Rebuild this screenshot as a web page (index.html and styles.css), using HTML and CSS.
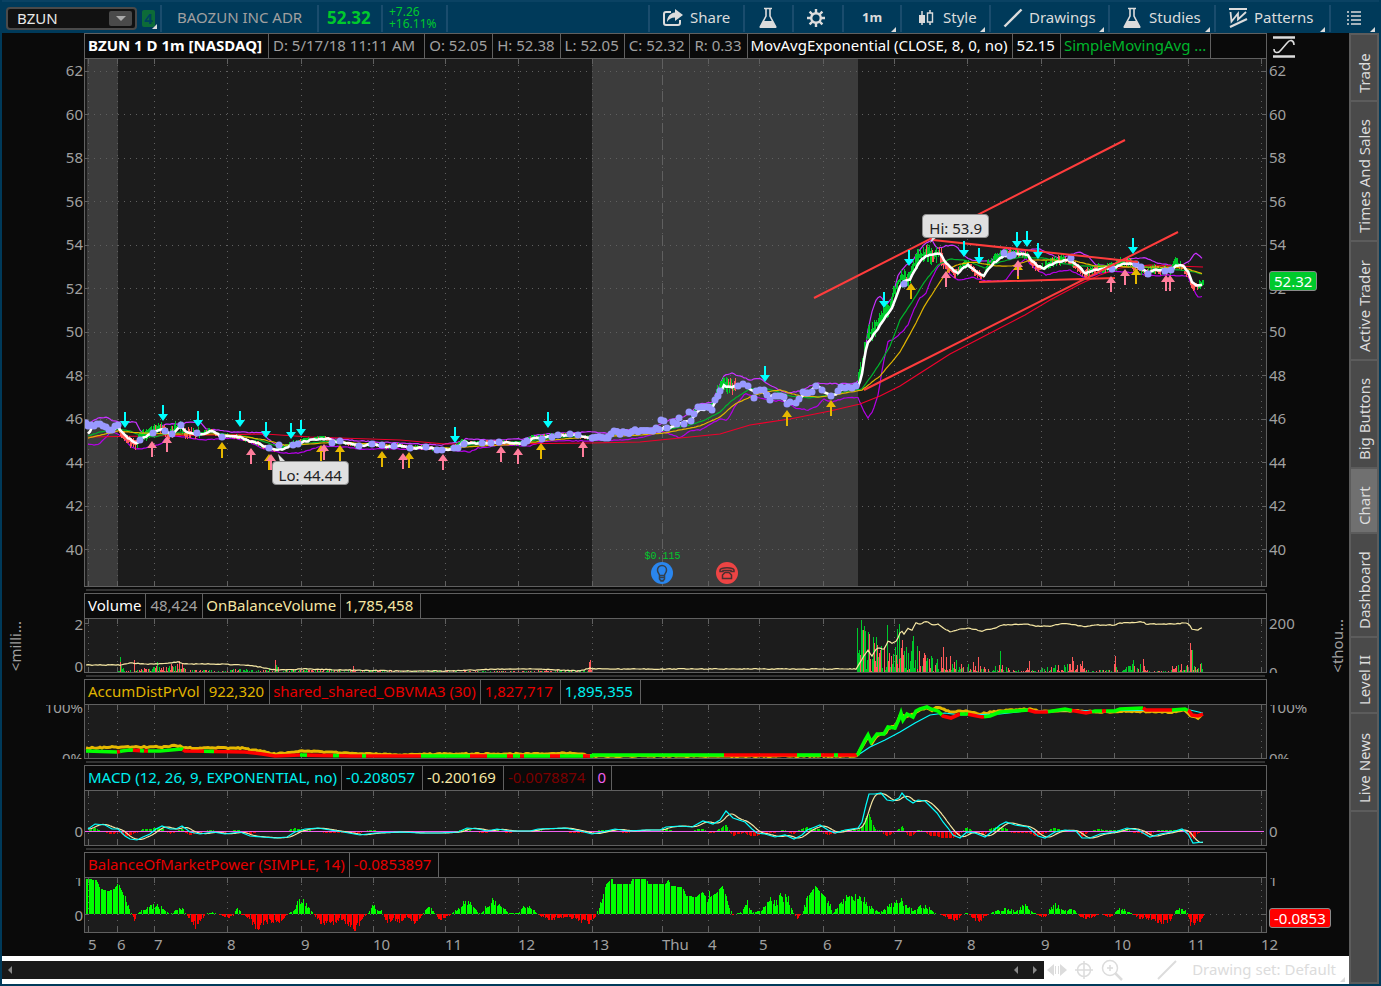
FILE: index.html
```html
<!DOCTYPE html>
<html lang="en">
<head>
    <meta charset="UTF-8">
    <meta name="viewport" content="width=device-width, initial-scale=1.0">
    <title>BZUN - Chart</title>
    <link rel="stylesheet" href="styles.css">
</head>
<body>
    <header class="toolbar">
        <div class="symbol">
            <input type="text" value="BZUN" aria-label="Symbol">
            <button type="button" aria-label="Symbol list"><svg width="10" height="5" viewBox="0 0 10 5"><path d="M0 0h10L5 5z" fill="#aaa"/></svg></button>
        </div>
        <button type="button" class="link-color">4</button>
        <div class="cell company">BAOZUN INC ADR</div>
        <div class="cell last">52.32</div>
        <div class="cell change"><span>+7.26</span><span>+16.11%</span></div>
        <div class="cell spacer"></div>

        <button type="button" class="cell tool share">
            <svg width="22" height="20" viewBox="0 0 22 20"><path d="M9 4H4a2 2 0 0 0-2 2v9a2 2 0 0 0 2 2h12a2 2 0 0 0 2-2v-3" fill="none" stroke="#dcdcdc" stroke-width="2"/><path d="M13 1l8 6-8 6V9.500c-4 0-6 1.500-8 4.500 0-5 3-9 8-9.500z" fill="#dcdcdc"/></svg>
            Share
        </button>
        <button type="button" class="cell tool flask" aria-label="Edit studies">
            <svg width="20" height="22" viewBox="0 0 20 22"><path d="M6 1.500h8M8 2v7L2.500 19.500h15L12 9V2" fill="none" stroke="#dcdcdc" stroke-width="1.600"/><path d="M5.500 14h9l4 7h-17z" fill="#dcdcdc"/></svg>
        </button>
        <button type="button" class="cell tool gear" aria-label="Settings">
            <svg width="20" height="20" viewBox="0 0 20 20"><circle cx="10" cy="10" r="4.800" fill="none" stroke="#dcdcdc" stroke-width="2.400"/><path d="M10 1v4M10 15v4M1 10h4M15 10h4M3.600 3.600l2.800 2.800M13.600 13.600l2.800 2.800M3.600 16.400l2.800-2.800M13.600 6.400l2.800-2.800" stroke="#dcdcdc" stroke-width="2.400"/></svg>
        </button>
        <button type="button" class="cell tool period more">1m</button>
        <button type="button" class="cell tool style more">
            <svg width="18" height="18" viewBox="0 0 18 18"><path d="M5 2v14M13 1v3M13 13v3" stroke="#dcdcdc" stroke-width="1.500"/><path d="M2 6h6v8H2z" fill="#dcdcdc"/><path d="M10.500 4h5v9h-5z" fill="none" stroke="#dcdcdc" stroke-width="1.400"/></svg>
            Style
        </button>
        <button type="button" class="cell tool drawings more">
            <svg width="20" height="20" viewBox="0 0 20 20"><path d="M1.500 18.500L18.500 1.500" stroke="#dcdcdc" stroke-width="2.400"/></svg>
            Drawings
        </button>
        <button type="button" class="cell tool studies more">
            <svg width="20" height="22" viewBox="0 0 20 22"><path d="M6 1.500h8M8 2v7L2.500 19.500h15L12 9V2" fill="none" stroke="#dcdcdc" stroke-width="1.600"/><path d="M5.500 14h9l4 7h-17z" fill="#dcdcdc"/></svg>
            Studies
        </button>
        <button type="button" class="cell tool patterns more">
            <svg width="20" height="22" viewBox="0 0 20 22"><path d="M1 2h18M2 20L19 12" stroke="#dcdcdc" stroke-width="2.200"/><path d="M2.500 5l1 9.500L10 6.500v6L18 5" fill="none" stroke="#dcdcdc" stroke-width="1.800"/></svg>
            Patterns
        </button>
        <button type="button" class="cell tool menu more" aria-label="Menu">
            <svg width="16" height="14" viewBox="0 0 16 14"><path d="M1 1h2M1 5h2M1 9h2M1 13h2M5 1h10M5 5h10M5 9h10M5 13h10" stroke="#dcdcdc" stroke-width="1.600"/></svg>
        </button>
    </header>

    <main class="workspace">
        <section class="charts">
            <div class="row price-row">
                <div class="axis left" id="priceLeft"></div>
                <div class="panel">
                    <div class="legend">
                        <span class="title">BZUN 1 D 1m [NASDAQ]</span>
                        <span class="date">D: 5/17/18 11:11 AM</span>
                        <span class="num">O: 52.05</span>
                        <span class="num">H: 52.38</span>
                        <span class="num">L: 52.05</span>
                        <span class="num">C: 52.32</span>
                        <span class="num">R: 0.33</span>
                        <span class="white">MovAvgExponential (CLOSE, 8, 0, no)</span>
                        <span class="white num">52.15</span>
                        <span class="green">SimpleMovingAvg ...</span>
                    </div>
                    <div class="plot">
                        <svg id="price" viewBox="85 59 1181 527" preserveAspectRatio="none"></svg>
                        <span class="bubble hi">Hi: 53.9</span>
                        <span class="bubble lo">Lo: 44.44</span>
                        <div class="event dividend">
                            <span>$0.115</span>
                            <svg width="22" height="22" viewBox="0 0 22 22"><circle cx="11" cy="11" r="11" fill="#2a86ee"/><path d="M8.500 13.500c0-2-2-2.500-2-5.500a4.500 4.500 0 0 1 9 0c0 3-2 3.500-2 5.500zM8.500 15.500h5M9 18.500h4M8.500 13v4l1.500 2h2l1.500-2v-4" fill="none" stroke="#33414f" stroke-width="1.500"/></svg>
                        </div>
                        <div class="event earnings">
                            <svg width="22" height="22" viewBox="0 0 22 22"><circle cx="11" cy="11" r="11" fill="#ee4444"/><path d="M4 9.500V8c1-3 13-3 14 0v1.500h-3V8.500H7v1zM6.500 16.500V13l2.500-2.500h4l2.500 2.500v3.500z" fill="none" stroke="#4a3030" stroke-width="1.500"/></svg>
                        </div>
                    </div>
                </div>
                <div class="axis right">
                    <svg class="fit" width="22" height="22" viewBox="0 0 22 22"><path d="M0 1.500h22M0 20.500h22" stroke="#dcdcdc" stroke-width="2.400"/><path d="M1 13c0 4 4 5 7 1L14 7c3-4 7-3 7 2" fill="none" stroke="#dcdcdc" stroke-width="1.600"/></svg>
                    <div class="ticks" id="priceRight"></div>
                    <span class="tag up">52.32</span>
                </div>
            </div>
            <div class="splitter"></div>

            <div class="row volume-row">
                <div class="axis left"><span class="unit">&lt;milli...</span><div class="ticks"><span>2</span><span>0</span></div></div>
                <div class="panel">
                    <div class="legend">
                        <span class="white">Volume</span>
                        <span class="num">48,424</span>
                        <span class="cream">OnBalanceVolume</span>
                        <span class="cream long">1,785,458</span>
                    </div>
                    <div class="plot"><svg id="volume" viewBox="85 619 1181 53" preserveAspectRatio="none"></svg></div>
                </div>
                <div class="axis right"><div class="ticks"><span>200</span><span>0</span></div><span class="unit">&lt;thou...</span></div>
            </div>
            <div class="splitter"></div>

            <div class="row accum-row">
                <div class="axis left"><div class="ticks"><span>100%</span><span>0%</span></div></div>
                <div class="panel">
                    <div class="legend">
                        <span class="gold">AccumDistPrVol</span>
                        <span class="gold num">922,320</span>
                        <span class="red">shared_shared_OBVMA3 (30)</span>
                        <span class="red long">1,827,717</span>
                        <span class="cyan long">1,895,355</span>
                    </div>
                    <div class="plot"><svg id="accum" viewBox="85 705 1181 53" preserveAspectRatio="none"></svg></div>
                </div>
                <div class="axis right"><div class="ticks"><span>100%</span><span>0%</span></div></div>
            </div>
            <div class="splitter"></div>

            <div class="row macd-row">
                <div class="axis left"><div class="ticks"><span>0</span></div></div>
                <div class="panel">
                    <div class="legend">
                        <span class="cyan">MACD (12, 26, 9, EXPONENTIAL, no)</span>
                        <span class="cyan long">-0.208057</span>
                        <span class="cream long">-0.200169</span>
                        <span class="maroon long">-0.0078874</span>
                        <span class="magenta num">0</span>
                    </div>
                    <div class="plot"><svg id="macd" viewBox="85 791 1181 54" preserveAspectRatio="none"></svg></div>
                </div>
                <div class="axis right"><div class="ticks"><span>0</span></div></div>
            </div>
            <div class="splitter"></div>

            <div class="row power-row">
                <div class="axis left"><div class="ticks"><span>1</span><span>0</span></div></div>
                <div class="panel">
                    <div class="legend">
                        <span class="red">BalanceOfMarketPower (SIMPLE, 14)</span>
                        <span class="red long">-0.0853897</span>
                    </div>
                    <div class="plot"><svg id="power" viewBox="85 878 1181 54" preserveAspectRatio="none"></svg></div>
                </div>
                <div class="axis right"><div class="ticks"><span>1</span></div><span class="tag down">-0.0853</span></div>
            </div>

            <div class="hours" id="hours"></div>

            <footer class="bottom-bar">
                <div class="scrollbar">
                    <button type="button" aria-label="Scroll left"><svg width="5" height="8" viewBox="0 0 5 8"><path d="M4 0v8L0 4z" fill="#888"/></svg></button>
                    <div class="track"></div>
                    <button type="button" aria-label="Step left"><svg width="5" height="8" viewBox="0 0 5 8"><path d="M4 0v8L0 4z" fill="#888"/></svg></button>
                    <button type="button" aria-label="Step right"><svg width="5" height="8" viewBox="0 0 5 8"><path d="M0 0v8l4-4z" fill="#888"/></svg></button>
                </div>
                <button type="button" class="expand" aria-label="Expand"><svg width="20" height="14" viewBox="0 0 20 14"><path d="M7 1v12L0 7zM13 1v12l7-6z" fill="#dcdcdc"/><path d="M8.500 3v8M11.500 3v8" stroke="#dcdcdc"/></svg></button>
                <button type="button" aria-label="Crosshair"><svg width="18" height="18" viewBox="0 0 18 18"><circle cx="9" cy="9" r="6.500" fill="none" stroke="#dcdcdc" stroke-width="1.500"/><path d="M9 0v18M0 9h18" stroke="#dcdcdc" stroke-width="1.500"/></svg></button>
                <button type="button" aria-label="Zoom in"><svg width="22" height="22" viewBox="0 0 22 22"><circle cx="9" cy="9" r="7.500" fill="none" stroke="#dcdcdc" stroke-width="1.500"/><path d="M6 9h6M9 6v6" stroke="#dcdcdc" stroke-width="1.500"/><path d="M14.500 14.500L21 21" stroke="#dcdcdc" stroke-width="2.500"/></svg></button>
                <button type="button" class="line" aria-label="Line"><svg width="20" height="20" viewBox="0 0 20 20"><path d="M1 19L19 1" stroke="#dcdcdc" stroke-width="2"/></svg></button>
                <button type="button" class="drawing-set more">Drawing set: Default</button>
            </footer>
        </section>

        <nav class="tabs">
            <button type="button" class="trade">Trade</button>
            <button type="button" class="times">Times And Sales</button>
            <button type="button" class="active-trader">Active Trader</button>
            <button type="button" class="big">Big Buttons</button>
            <button type="button" class="chart selected">Chart</button>
            <button type="button" class="dashboard">Dashboard</button>
            <button type="button" class="level">Level II</button>
            <button type="button" class="news">Live News</button>
            <div class="rest"></div>
        </nav>
    </main>

    <script src="chart.js"></script>
</body>
</html>
```
FILE: styles.css
```css
* {
    box-sizing: border-box;
}

body {
    margin: 0;
    min-height: 100vh;
    display: flex;
    flex-direction: column;
    background-color: #003a5a;
    color: #a0a0a0;
    font-family: "Noto Sans", "Open Sans", sans-serif;
    font-size: 15px;
    line-height: 22px;
    padding: 0 2px 2px;
}

button,
input {
    font: inherit;
    color: inherit;
    background: none;
    border: 0;
    padding: 0;
    margin: 0;
}

svg {
    display: block;
    flex: none;
}

/* Toolbar */
.toolbar {
    display: flex;
    align-items: center;
    height: 33px;
    padding: 2px 0 0 4px;
    border-top: 2px solid #0a4263;
}

.symbol {
    display: flex;
    align-items: center;
    width: 131px;
    height: 23px;
    padding: 0 3px 0 9px;
    background-color: #111;
    border: 2px solid #4a4a4a;
    border-radius: 4px;
    color: #e8e8e8;
}

.symbol input {
    flex: 1;
    min-width: 0;
    height: 19px;
    padding-bottom: 2px;
    outline: 0;
}

.symbol button {
    display: flex;
    align-items: center;
    justify-content: center;
    width: 23px;
    height: 15px;
    background-color: #4a4a4a;
    border-radius: 2px;
}

.link-color {
    position: relative;
    width: 13px;
    height: 17px;
    margin: 0 5px;
    background-color: #0d6b38;
    border-radius: 2px;
    color: #00425f;
    font-weight: bold;
    line-height: 15px;
}

.cell {
    height: 27px;
    border-left: 2px solid #1a4c6d;
    line-height: 25px;
    white-space: nowrap;
}

.company {
    width: 157px;
    padding-left: 15px;
}

.last {
    width: 64px;
    padding-left: 8px;
    color: #00c92c;
    font-size: 17px;
    font-weight: bold;
}

.change {
    display: flex;
    flex-direction: column;
    width: 65px;
    padding: 1px 0 0 6px;
    color: #00c92c;
    font-size: 12px;
    line-height: 12px;
}

.spacer {
    flex: 1;
}

.tool {
    position: relative;
    display: flex;
    align-items: center;
    gap: 6px;
    padding: 0 0 2px 12px;
    color: #dcdcdc;
}

.share { width: 95px; }
.flask { width: 49px; padding-left: 13px; }
.gear { width: 50px; }
.period { width: 58px; padding-left: 18px; font-size: 13px; font-weight: bold; }
.style { width: 89px; padding-left: 15px; gap: 8px; }
.drawings { width: 119px; }
.studies { width: 106px; gap: 7px; }
.patterns { width: 115px; }
.menu { width: 50px; padding-left: 15px; }

.link-color::after,
.more::after {
    content: "";
    position: absolute;
    right: 4px;
    bottom: 0;
    border-left: 5px solid transparent;
    border-bottom: 5px solid #dcdcdc;
}

.link-color::after {
    right: -2px;
    bottom: -2px;
}

/* Chart area */
.workspace {
    flex: 1;
    display: flex;
}

.charts {
    flex: 1;
    min-width: 0;
    display: flex;
    flex-direction: column;
    background-color: #0a0a0a;
}

.row {
    display: grid;
    grid-template-columns: 82px minmax(0, 1fr) 82px;
}

.price-row {
    flex: 1;
}

.volume-row,
.accum-row {
    height: 80px;
}

.macd-row,
.power-row {
    height: 81px;
}

.splitter {
    height: 2px;
    margin: 2px 84px;
    background-color: #333;
}

.panel {
    display: flex;
    flex-direction: column;
    border: 1px solid #606060;
}

.legend {
    display: flex;
    height: 25px;
    border-bottom: 1px solid #606060;
    overflow: hidden;
}

.legend span {
    padding: 0 4px 0 3px;
    border-right: 1px solid #606060;
    white-space: nowrap;
}

.legend .title {
    padding-right: 6px;
    color: #fff;
    font-weight: bold;
}

.legend .num { padding: 0 5px 0 4px; }
.legend .long { padding: 0 7px 0 4px; }
.legend .date { padding: 0 9px 0 4px; }

.legend .white { color: #fff; }
.legend .green { color: #00b52c; }
.legend .cream { color: #f5e6a3; }
.legend .gold { color: #e0b400; }
.legend .red { color: #e60000; }
.legend .cyan { color: #00f0f0; }
.legend .maroon { color: #7a0000; }
.legend .magenta { color: #f060f0; }

.plot {
    position: relative;
    flex: 1;
    min-height: 0;
    background-color: #1c1c1c;
}

.plot > svg {
    position: absolute;
    width: 100%;
    height: 100%;
}

/* Price scales */
.axis {
    position: relative;
    display: flex;
    padding-top: 26px;
    justify-content: space-between;
}

.ticks {
    display: flex;
    flex-direction: column;
    justify-content: space-between;
    overflow: hidden;
    line-height: 2px;
}

.left {
    padding-right: 1px;
    text-align: right;
}

.left .ticks {
    margin-left: auto;
}

.right {
    padding-left: 2px;
}

#priceLeft,
#priceRight {
    line-height: 22px;
}

#priceLeft {
    flex-direction: column;
    padding-bottom: 27px;
}

#priceRight {
    padding: 0 0 27px;
}

.fit {
    position: absolute;
    left: 6px;
    top: 3px;
}

.volume-row .ticks { padding: 4px 0 6px; }
.volume-row .right .ticks { padding: 3px 0 0; }
.accum-row .ticks { padding: 1px 0 0; }
.macd-row .ticks { padding: 39px 0 0; }
.power-row .ticks { padding: 1px 0 17px; }

.unit {
    writing-mode: vertical-rl;
    transform: rotate(180deg);
    align-self: center;
    line-height: 20px;
}

.left .unit {
    margin-left: 3px;
}

.right .unit {
    margin-right: 2px;
}

.tag {
    position: absolute;
    left: 2px;
    padding: 0 4px;
    border: 1px solid #8a8a8a;
    border-radius: 3px;
    color: #fff;
    line-height: 18px;
}

.up {
    top: 43%;
    background-color: #00c92c;
}

.down {
    bottom: 5px;
    background-color: #f00;
}

/* Labels lying on the price plot */
.bubble {
    position: absolute;
    height: 24px;
    padding: 0 6px;
    border: 1px solid #909090;
    border-radius: 4px;
    background-color: #e0e0e0;
    color: #222;
    line-height: 26px;
}

.hi {
    left: 70.9%;
    top: 29.5%;
}

.lo {
    left: 15.8%;
    top: 76.2%;
}

.event {
    position: absolute;
    bottom: 2px;
    display: flex;
    flex-direction: column;
    align-items: center;
    width: 40px;
}

.event span {
    color: #00c92c;
    font: 10px/8px "Liberation Mono", monospace;
    padding-bottom: 1px;
}

.dividend {
    left: 47.2%;
}

.earnings {
    left: 52.7%;
}

.hours {
    display: grid;
    height: 23px;
    margin: 0 83px;
    white-space: nowrap;
}

/* Scrollbar and drawing tools */
.bottom-bar {
    display: flex;
    align-items: center;
    height: 28px;
    background-color: #fff;
    color: #dcdcdc;
}

.bottom-bar > button {
    margin-left: 8px;
}

.scrollbar {
    flex: 1;
    display: flex;
    align-items: center;
    justify-content: space-between;
    height: 18px;
    padding: 0 6px;
    background-color: #191919;
}

.scrollbar .track {
    flex: 1;
}

.scrollbar button + button {
    margin-left: 14px;
}

.bottom-bar .expand {
    margin-left: 3px;
}

.bottom-bar .line {
    margin-left: 34px;
}

.bottom-bar .drawing-set {
    position: relative;
    margin-left: 15px;
    padding: 0 13px 2px 0;
}

/* Side tabs */
.tabs {
    display: flex;
    flex-direction: column;
    gap: 2px;
    width: 30px;
    padding: 2px;
    background-color: #5c5c5c;
    color: #dcdcdc;
}

.tabs button {
    writing-mode: vertical-rl;
    transform: rotate(180deg);
    width: 26px;
    background-color: #4a4a4a;
    line-height: 26px;
    text-align: left;
    padding-top: 7px;
}

.tabs .selected {
    background-color: #707070;
}

.trade { height: 65px; }
.times { height: 138px; }
.active-trader { height: 117px; }
.big { height: 106px; }
.chart { height: 63px; }
.dashboard { height: 102px; }
.level { height: 74px; }
.news { height: 96px; }

.rest {
    flex: 1;
    background-color: #4a4a4a;
}
```
FILE: chart.js
```js
const hours = [
    [88, '5'], [117, '6'], [154, '7'], [227, '8'], [301, '9'], [373, '10'], [445, '11'],
    [518, '12'], [592, '13'], [662, 'Thu'], [708, '4'], [759, '5'], [823, '6'], [894, '7'],
    [967, '8'], [1041, '9'], [1114, '10'], [1188, '11'], [1261, '12']
];

// Repeatable noise for the wicks and bars
let seed = 7;
function rnd() {
    seed = (seed * 16807) % 2147483647;
    return seed / 2147483647;
}

function parse(text) {
    return text.trim().split(/\s+/).map(p => p.split(',').map(Number));
}

function at(points, x) {
    if (x <= points[0][0]) return points[0][1];
    for (let i = 1; i < points.length; i++) {
        if (x <= points[i][0]) {
            const [x0, y0] = points[i - 1];
            const [x1, y1] = points[i];
            return y0 + (y1 - y0) * (x - x0) / (x1 - x0);
        }
    }
    return points[points.length - 1][1];
}

// Line with a little tick noise
function rough(points, amount, from = 88, to = 1203) {
    let out = '';
    for (let x = from; x <= to; x += 2) {
        out += `${x},${(at(points, x) + (rnd() - 0.5) * amount).toFixed(1)} `;
    }
    return out;
}

function line(points, color, width = 1) {
    return `<polyline points="${points}" fill="none" stroke="${color}" stroke-width="${width}"/>`;
}

function path(d, color, width = 1, extra = '') {
    return `<path d="${d}" fill="none" stroke="${color}" stroke-width="${width}" shape-rendering="crispEdges" ${extra}/>`;
}

function grid(top, bottom) {
    let dots = '';
    let ends = '';
    hours.forEach(([x]) => {
        dots += `M${x + 0.5} ${top}V${bottom}`;
        ends += `M${x + 0.5} ${top}v5M${x + 0.5} ${bottom}v-5`;
    });
    return path(dots, '#606060', 1, 'stroke-dasharray="1 5"') + path(ends, '#606060');
}

// ---- Price ----
const ema = parse(`88,434 92,428 98,425 105,427 112,430 118,427 122,432 127,437 132,441 137,444 142,438 147,436 152,433 158,430 163,429 168,433 172,434 176,430 181,426 185,431 190,433 197,434 204,434 210,431 216,433 222,437 228,436 234,437 240,437 246,439 252,442 258,443 264,446 270,448 276,450 282,449 288,447 294,444 300,443 306,441 314,440 322,439 328,439 334,441 340,442 347,443 354,445 361,446 368,445 375,445 382,446 390,447 400,446 410,448 420,448 430,448 440,450 450,450 456,448 460,445 464,442 470,443 480,443 490,443 500,442 510,443 520,444 526,443 532,439 540,438 548,437 556,436 566,435 576,435 584,437 590,438 600,437 608,437 614,432 622,433 630,432 640,430 650,430 658,429 661,430 664,427 670,428 677,425 683,422 690,421 698,411 706,409 712,408 716,401 720,393 724,386 728,386 733,387 738,386 743,385 748,387 752,391 756,391 762,391 767,396 773,396 781,396 786,402 791,403 797,402 803,395 808,392 814,388 817,386 821,389 826,393 831,396 836,394 841,390 846,389 852,388 858,386 860,381 863,370 865,352 868,342 872,337 877,330 882,322 887,315 892,308 896,297 900,286 904,281 910,279 914,272 918,264 923,258 928,255 934,255 940,253 944,260 950,267 954,271 958,273 962,269 968,265 974,269 980,274 984,276 988,269 994,263 1000,258 1005,256 1010,254 1018,254 1028,255 1032,261 1038,266 1044,268 1050,265 1058,262 1066,260 1072,261 1076,264 1080,268 1085,273 1092,271 1100,269 1108,268 1116,267 1122,264 1130,263 1135,265 1140,268 1148,273 1155,270 1165,270 1172,271 1176,265 1183,266 1188,271 1192,282 1197,286 1203,284`);
const sma = parse(`88,436 100,432 118,429 130,431 142,436 154,437 166,434 180,432 195,434 210,432 230,435 250,437 265,442 280,447 295,446 310,443 330,441 350,443 380,446 420,447 450,448 470,445 500,443 530,441 560,437 590,436 640,433 665,430 690,425 705,420 720,412 730,402 740,395 750,389 765,388 775,391 790,396 810,398 830,395 850,391 862,389 872,375 880,363 890,346 900,320 912,302 925,281 938,265 950,259 965,260 985,268 1000,262 1020,257 1045,258 1060,263 1080,266 1110,266 1140,267 1170,269 1190,271 1203,274`);
const slow = parse(`88,438 118,431 140,433 165,434 190,434 215,434 240,436 265,440 285,445 310,444 340,442 370,444 410,447 450,448 480,446 520,444 550,440 590,437 640,435 665,433 700,426 720,417 735,404 750,397 765,392 780,390 800,396 820,397 840,394 862,390 880,376 900,352 915,325 925,305 940,282 950,268 960,264 975,262 995,266 1012,266 1030,260 1050,260 1075,261 1095,266 1130,267 1160,267 1185,268 1203,274`);
const longAvg = '88,437 150,436 265,434 310,437 400,440 445,444 500,444 590,443 640,442 690,437 720,434 750,425 790,419 830,411 860,404 880,396 900,386 925,370 950,354 975,341 1000,328 1025,315 1050,300 1080,284 1100,275 1120,268 1150,265 1203,267';
const upper = parse(`88,424 98,418 107,417 113,421 122,422 136,422 141,432 150,434 158,428 165,424 178,424 192,422 200,422 206,429 220,430 232,432 242,432 262,433 268,439 276,445 290,445 305,441 318,437 335,439 360,441 400,443 440,445 458,442 466,439 490,440 525,439 535,435 565,433 590,432 608,433 614,430 650,429 662,423 672,419 683,417 690,413 700,404 712,402 720,385 724,376 731,373 742,377 750,380 760,378 765,382 775,388 786,393 800,391 812,385 818,383 840,384 857,383 862,375 868,330 872,312 877,298 881,296 886,305 892,298 898,275 905,266 912,262 918,252 925,244 932,240 937,249 945,246 955,245 962,253 968,259 978,261 990,261 997,256 1006,247 1012,252 1028,250 1040,249 1050,254 1060,259 1072,254 1080,252 1088,256 1096,265 1110,266 1125,259 1145,258 1158,263 1170,265 1182,266 1190,260 1195,253 1200,256 1203,260`);
const lower = parse(`88,444 98,445 105,438 112,431 118,434 124,438 130,446 137,449 145,448 155,446 162,443 168,436 185,437 205,440 232,438 245,440 262,448 272,451 284,453 300,453 315,448 325,446 345,447 360,449 400,449 440,449 470,452 478,448 500,445 530,446 545,441 590,441 620,440 640,438 662,431 680,438 690,431 700,430 712,423 720,419 727,421 734,408 745,393 755,397 765,399 775,401 785,401 795,408 808,410 818,406 823,399 832,402 845,398 858,397 863,410 868,418 873,411 878,395 883,365 888,342 895,338 902,332 908,325 914,309 920,298 926,293 931,280 937,268 943,262 950,274 958,280 965,279 972,277 985,281 1005,281 1012,272 1020,263 1026,259 1034,268 1046,275 1060,271 1070,270 1085,278 1100,273 1115,271 1135,273 1150,276 1170,275 1188,276 1192,287 1198,297 1203,297`);
const dots = parse(`86,423 88,426 91,425 94,426 97,424 100,424 103,426 106,427 109,430 112,430 115,426 118,425 140,440 153,433 165,431 172,434 181,425 197,433 222,437 269,448 279,445 293,445 298,444 332,443 340,441 359,446 372,444 382,445 394,446 410,448 426,447 437,450 442,450 454,448 458,448 464,444 482,443 491,443 499,442 524,443 527,441 542,439 552,437 558,435 570,434 578,435 592,438 608,438 661,420 664,421 667,428 673,422 677,424 679,418 684,424 689,412 691,421 694,414 698,407 701,407 704,407 707,407 709,407 712,410 715,400 718,396 720,391 738,386 743,384 748,386 754,398 756,391 760,390 764,390 767,395 770,400 775,396 778,396 781,396 784,397 787,404 790,402 796,403 799,399 803,392 806,393 808,393 812,392 816,386 822,390 831,396 838,391 841,387 845,388 848,387 852,388 856,386 904,284 1004,253 1010,256 1013,255 1071,258 1112,269 1136,264 1141,267 1148,274 1165,271 1171,270`);
const sells = parse(`125,428 163,421 198,427 240,427 266,438 291,439 301,436 455,443 548,428 765,382 884,308 909,266 964,257 979,264 1017,248 1027,247 1038,259 1133,254`);
const buys = parse(`222,442 269,454 321,445 340,445 382,451 409,452 541,443 787,410 831,400 911,283 1018,263 1136,268`);
const bounces = parse(`152,441 167,436 251,448 271,454 324,444 403,453 443,454 501,446 518,448 583,441 946,271 1018,260 1111,276 1125,269 1166,275 1170,275`);

function wicks() {
    let up = '';
    let down = '';
    for (let x = 118; x < 1204; x += 1) {
        if (x > 592 && x < 690 || x > 738 && x < 858) continue;
        let size = 2;
        if (x < 200) size = 6;
        if (x > 945) size = 5;
        if (x > 715 && x < 738) size = 8;
        if (x > 857 && x <= 945) size = 10;
        const slope = at(ema, x + 3) - at(ema, x - 3);
        const mid = at(ema, x) + Math.max(-9, Math.min(5, slope * 0.6));
        const h = rnd() * size + 1;
        const bar = `M${x + 0.5} ${Math.round(mid - h)}V${Math.round(mid + rnd() * size)}`;
        if (rnd() * 8 - slope > 4) up += bar; else down += bar;
    }
    return path(up, '#00c92c') + path(down, '#ff5a5a');
}

function arrow(x, y, dir, color) {
    return `<path d="M${x} ${y}l-5 ${-dir * 7}h4v${-dir * 9}h2v${dir * 9}h4z" fill="${color}"/>`;
}

function drawPrice() {
    let s = '<g fill="#3c3c3c"><path d="M87 59h31v527h-31zM592 59h266v527h-266z"/></g>';
    let rows = '';
    let ends = '';
    for (let i = 0; i < 12; i++) {
        const y = Math.floor(71 + i * 43.5) + 0.5;
        rows += `M88 ${y}H1261`;
        ends += `M85 ${y}h4M1266 ${y}h-4`;
    }
    s += path(rows, '#606060', 1, 'stroke-dasharray="1 5"') + path(ends, '#606060') + grid(59, 586);
    s += path('M662.5 59V586', '#606060', 1, 'stroke-dasharray="10 6"');
    s += line(rough(upper, 1), '#c832ff', 1.2) + line(rough(lower, 1), '#b400e6', 1.2);
    s += line(longAvg, '#f0002d', 1.2) + wicks();
    s += line(rough(sma, 0.5), '#00b52c', 1.2) + line(rough(slow, 0.5), '#e0b400', 1.2);
    s += line(rough(ema, 1.5), '#fff', 2.6);
    for (let x = 593; x < 662; x += 3) {
        dots.push([x, at(ema, x) + (rnd() - 0.5) * 3]);
    }
    dots.forEach(([x, y]) => { s += `<circle cx="${x}" cy="${y}" r="3.5" fill="#9999ff"/>`; });
    s += '<path d="M814 298L1125 140M933 240L1138 262M864 390L1178 232M979 282L1115 278" fill="none" stroke="#ff3c3c" stroke-width="2"/>';
    sells.forEach(([x, y]) => { s += arrow(x, y, 1, '#00ffff'); });
    buys.forEach(([x, y]) => { s += arrow(x, y, -1, '#e6b800'); });
    bounces.forEach(([x, y]) => { s += arrow(x, y, -1, '#ff7d9b'); });
    s += '<path d="M278 454l2 8h6zM930 243l3-7h5z" fill="#e0e0e0"/>';
    document.getElementById('price').innerHTML = s;
}

// ---- Volume ----
const volumeMax = parse(`118,2 121,15 124,3 155,6 157,18 160,4 181,14 186,3 225,2 245,4 247,8 250,3 274,4 276,12 279,2 300,4 303,3 450,1 587,2 589,12 592,0 856,0 857,48 861,52 868,44 872,30 877,40 885,26 893,20 896,48 900,50 904,30 913,36 918,24 925,20 940,12 944,26 948,10 960,14 970,8 977,12 982,6 1000,8 1010,3 1025,2 1028,10 1032,2 1070,10 1074,12 1080,8 1090,3 1113,2 1115,16 1119,2 1133,10 1143,12 1148,2 1170,1 1173,10 1186,8 1189,12 1191,30 1194,8 1199,10 1203,11`);
const tallBars = parse(`857,44,1 861,52,1 862,42,1 865,41,1 869,38,0 873,35,1 876,35,1 887,47,1 897,43,1 899,48,1 902,32,0 913,36,1 917,26,1 943,25,0 950,16,0 978,15,0 1000,21,1 1029,11,0 1072,15,0 1082,11,0 1115,16,0 1133,12,1 1143,13,0 1190,29,0 1191,22,0 120,15,1 134,12,0 157,10,1 182,9,0 275,12,0 353,6,0 590,12,0`);
const obv = parse(`86,665 117,665 120,665 130,663 145,664 157,664 178,662 184,664 200,664 215,664 245,665 260,667 275,670 305,669 345,670 400,671 445,671 500,669 540,669 580,671 590,668 593,669 857,669 858,666 862,659 868,650 872,656 877,648 884,649 888,641 892,643 897,641 901,630 904,634 908,628 912,630 916,623 920,624 927,621 932,625 938,624 945,629 951,632 960,629 968,628 982,631 995,628 1002,625 1028,624 1035,626 1050,626 1065,623 1075,625 1086,627 1095,625 1115,625 1120,623 1143,622 1146,624 1172,624 1185,623 1189,624 1192,629 1198,630 1203,627`);

function drawVolume() {
    let up = '';
    let down = '';
    for (let x = 118; x < 1203; x++) {
        const h = Math.round(at(volumeMax, x) * Math.pow(rnd(), 1.6));
        if (h < 1) continue;
        const bar = `M${x + 0.5} 672v${-h}`;
        if (rnd() > 0.5) up += bar; else down += bar;
    }
    tallBars.forEach(([x, h, green]) => {
        const bar = `M${x + 0.5} 672v${-h}`;
        if (green) up += bar; else down += bar;
    });
    document.getElementById('volume').innerHTML = grid(619, 672) + path('M85 623.5h4', '#606060')
        + path(up, '#00c92c') + path(down, '#ff5a5a')
        + line(rough(obv, 0.8, 86), '#f5e6a3', 1.2);
}

// ---- Accumulation ----
const accum = parse(`86,751 117,752 122,751 130,750 145,751 160,751 182,749 185,751 245,752 262,754 275,756 300,755 350,756 430,756 592,756 593,755 857,755 858,754 861,748 865,740 868,735 871,742 877,734 884,734 888,727 895,728 899,719 901,713 903,720 907,714 913,717 916,711 920,709 927,707 931,709 938,711 943,716 951,718 960,714 967,714 982,717 990,716 1000,712 1028,710 1035,712 1046,712 1065,709 1075,711 1086,713 1095,711 1115,711 1120,709 1143,708 1146,710 1172,710 1185,709 1189,711 1192,715 1198,716 1203,714`);
const dist = parse(`86,748 117,747 130,747 165,747 175,745 185,748 245,748 250,750 262,751 275,754 305,751 345,753 400,755 445,754 530,754 575,753 592,756 857,756 860,750 865,742 868,737 872,743 878,735 886,733 888,729 896,725 901,714 905,717 914,714 920,710 927,708 932,711 937,707 945,710 950,712 965,711 980,714 1000,711 1028,709 1040,711 1080,711 1100,712 1130,711 1172,712 1185,710 1190,716 1198,718 1203,714`);
const obvAvg = '858,755 870,747 885,740 900,732 915,723 930,715 945,713 960,715 1000,714 1025,711 1190,710 1203,713';
const trend = '86g 117r 120g 133r 140g 144r 148g 183r 204g 214r 300g 307r 333g 339r 362g 366r 421g 445g 470r 487g 507r 513g 520r 524g 550r 560g 583r 590g 724r 797g 821r 834g 838r 857g 942r 960g 968r 984g 1028r 1048g 1072r 1092g 1102r 1106g 1143r 1172g 1188r 1203r'.split(' ');

function drawAccum() {
    let s = grid(705, 758) + line(rough(dist, 1.2, 86), '#e6b800', 3) + line(obvAvg, '#00ffff', 1.2);
    for (let i = 0; i < trend.length - 1; i++) {
        const from = parseInt(trend[i]);
        const to = parseInt(trend[i + 1]);
        const color = trend[i].endsWith('g') ? '#00ff00' : '#ff0000';
        const inner = accum.filter(([x]) => x > from && x < to);
        const points = [[from, at(accum, from)], ...inner, [to, at(accum, to)]];
        s += line(points.join(' '), color, 3.6);
    }
    document.getElementById('accum').innerHTML = s;
}

// ---- MACD ----
const macd = parse(`88,829 95,824 105,825 112,829 118,829 125,836 130,839 137,840 143,837 150,834 156,829 162,826 170,829 176,829 182,826 190,832 200,834 213,832 225,834 240,832 250,836 262,837 275,838 287,837 295,832 305,829 318,828 330,830 343,832 360,835 375,833 400,832 420,833 440,833 458,832 467,828 478,829 487,831 497,829 510,831 530,831 538,829 565,828 580,831 588,833 592,834 602,832 615,829 628,831 645,830 660,830 666,827 680,826 692,827 703,821 713,824 720,820 726,811 733,818 745,822 752,829 757,833 765,834 775,837 785,835 794,839 802,835 807,830 815,827 820,825 828,830 835,833 845,830 858,828 862,822 866,805 869,794 875,794 881,793 887,800 893,801 899,798 902,793 907,799 913,803 918,800 925,801 930,806 937,813 943,822 948,828 953,835 960,838 967,832 975,833 985,837 993,831 1000,825 1006,822 1015,825 1028,827 1038,836 1045,838 1055,832 1065,830 1076,831 1082,838 1090,838 1100,834 1115,832 1127,828 1138,830 1150,837 1160,834 1172,832 1182,829 1188,834 1193,843 1203,842`);

function drawMacd() {
    let signal = '';
    let up = '';
    let down = '';
    for (let x = 88; x < 1204; x++) {
        let sum = 0;
        for (let k = 0; k < 10; k++) sum += at(macd, x - k);
        const avg = sum / 10;
        signal += `${x},${avg.toFixed(1)} `;
        const diff = Math.round(avg - at(macd, x));
        if (x % 4 === 0 || diff === 0) continue;
        if (diff > 0) up += `M${x + 0.5} 831v${-diff}`;
        else down += `M${x + 0.5} 832v${-diff}`;
    }
    document.getElementById('macd').innerHTML = grid(791, 845)
        + path('M85 831.5H1264', '#f060f0') + path(up, '#00e000') + path(down, '#e60000')
        + line(signal, '#f5e6a3', 1.2) + line(macd.join(' '), '#00ffff', 1.2);
}

// ---- Balance of market power ----
const power = parse(`86,35 96,34 100,25 108,23 114,25 118,31 121,24 126,12 131,1 134,-6 137,0 142,4 150,7 158,8 165,3 170,0 176,4 182,5 188,-3 195,-11 200,-8 205,0 210,2 220,-1 228,-4 233,-2 238,8 241,-1 248,-4 256,-12 262,-10 270,-7 280,-8 288,0 295,5 299,14 303,11 308,6 313,0 320,-8 330,-10 340,-4 347,-9 354,-15 362,-5 370,3 372,9 376,4 382,3 386,-9 392,-5 400,-7 406,-2 414,-9 420,-3 425,3 430,7 434,1 440,-6 450,-1 456,4 466,12 473,6 480,0 485,6 492,12 500,9 508,1 518,1 524,7 532,5 538,-1 550,-5 560,-3 575,-4 588,-9 595,-2 600,10 606,30 611,35 612,35 613,30 630,30 632,35 646,35 648,30 665,30 668,34 671,28 682,27 686,18 696,17 702,22 706,16 710,17 716,21 722,28 727,15 732,-1 742,2 747,12 752,1 760,3 768,14 775,10 782,17 788,13 793,1 798,-5 803,4 808,18 815,28 820,22 826,16 833,1 840,10 850,19 857,13 863,14 873,4 880,1 888,8 894,8 900,14 906,7 914,3 920,8 928,6 934,1 942,-1 950,-5 957,-5 962,0 967,1 973,-4 980,-7 985,-2 995,3 1002,4 1008,5 1015,3 1025,8 1032,2 1040,-2 1045,-3 1050,5 1055,8 1062,4 1073,4 1080,-3 1090,-4 1100,0 1110,-3 1118,4 1125,4 1132,0 1140,-4 1150,-4 1160,-8 1170,-6 1175,4 1182,5 1187,1 1190,-9 1195,-8 1200,-7 1203,-2`);

function drawPower() {
    let up = '';
    let down = '';
    for (let x = 86; x < 1204; x++) {
        if (x % 6 === 4) continue;
        let v = at(power, x);
        if (Math.abs(v) < 17) v *= 0.7 + rnd() * 0.7;
        v = Math.round(v);
        if (v > 0) up += `M${x + 0.5} 914v${-v}`;
        if (v < 0) down += `M${x + 0.5} 914v${-v}`;
    }
    document.getElementById('power').innerHTML = grid(878, 932)
        + path('M88 914.5H1262', '#606060', 1, 'stroke-dasharray="1 5"') + path('M85 914.5h4M1266 914.5h-4', '#606060')
        + path(up, '#00ff00') + path(down, '#ff0000');
}

// ---- Scales ----
function drawScales() {
    let prices = '';
    for (let p = 62; p >= 40; p -= 2) prices += `<span>${p}</span>`;
    document.getElementById('priceLeft').innerHTML = prices;
    document.getElementById('priceRight').innerHTML = prices;

    const box = document.getElementById('hours');
    let columns = '3fr';
    let labels = '<span></span>';
    hours.forEach(([x, label], i) => {
        const next = i + 1 < hours.length ? hours[i + 1][0] : 1266;
        columns += ` minmax(0, ${next - x}fr)`;
        labels += `<span>${label}</span>`;
    });
    box.style.gridTemplateColumns = columns;
    box.innerHTML = labels;
}

drawPrice();
drawVolume();
drawAccum();
drawMacd();
drawPower();
drawScales();
```
